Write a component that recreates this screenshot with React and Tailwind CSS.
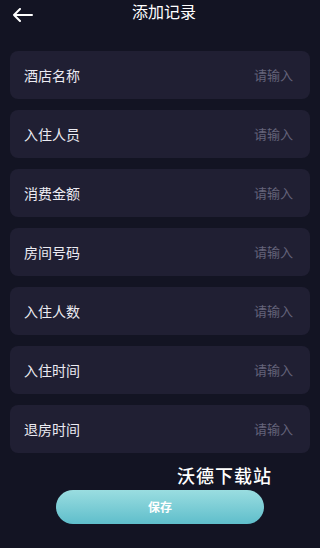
const fields = ["酒店名称", "入住人员", "消费金额", "房间号码", "入住人数", "入住时间", "退房时间"];

export default function App() {
  return (
    <div
      className="flex h-[548px] w-[320px] flex-col overflow-hidden bg-[#131423] text-white"
      style={{ fontFamily: '"Noto Sans CJK SC", "Noto Sans", sans-serif' }}
    >
      <div className="relative flex h-[26px] items-start justify-center pl-[8px]">
        <svg
          className="absolute left-[12px] top-[8px] h-[14px] w-[22px]"
          viewBox="0 0 22 14"
          fill="none"
          stroke="currentColor"
          strokeWidth="2"
          strokeLinecap="round"
          strokeLinejoin="round"
        >
          <path d="M20 7H2M8 1L2 7l6 6" />
        </svg>
        <div className="text-[16px] leading-[23px]">添加记录</div>
      </div>

      <div className="mt-[25px] flex flex-col gap-[11px] px-[10px]">
        {fields.map((label) => (
          <div
            key={label}
            className="flex h-[48px] items-center justify-between rounded-[8px] bg-[#201f33] pl-[14px] pr-[17px]"
          >
            <span className="text-[14px] text-[#ecebf2]">{label}</span>
            <span className="text-[13px] text-[#64637a]">请输入</span>
          </div>
        ))}
      </div>

      <div className="mt-[9px] flex justify-end pr-[48px]">
        <span className="text-[18px] font-medium leading-[26px] tracking-[1px]">沃德下载站</span>
      </div>

      <div className="mt-[2px] flex justify-center">
        <button
          type="button"
          className="flex h-[34px] w-[208px] items-center justify-center rounded-full bg-[linear-gradient(180deg,_#9adde0_0%,_#5fbecb_100%)] text-[12px] font-bold text-white"
        >
          保存
        </button>
      </div>
    </div>
  );
}
